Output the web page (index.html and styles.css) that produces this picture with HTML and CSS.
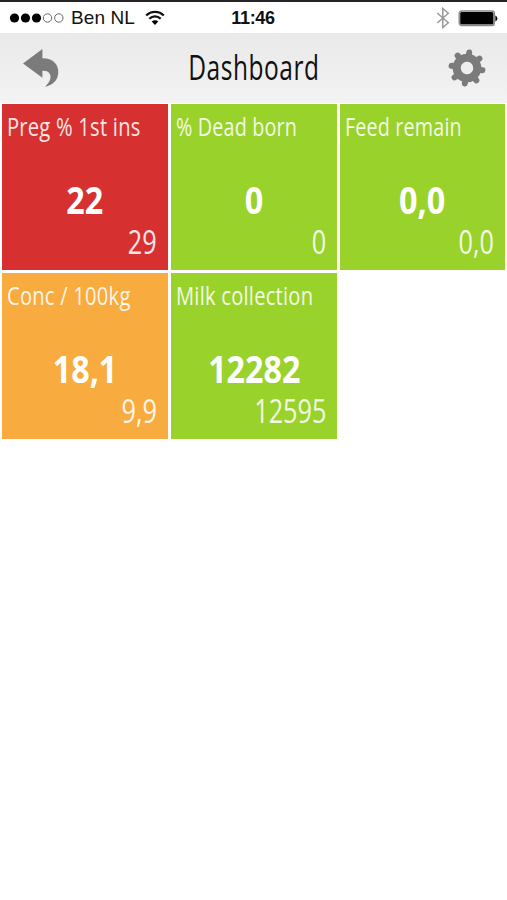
FILE: index.html
```
<!DOCTYPE html>
<html lang="en">
<head>
    <meta charset="UTF-8">
    <meta name="viewport" content="width=device-width, initial-scale=1.0">
    <title>Dashboard</title>
    <link rel="stylesheet" href="styles.css">
</head>
<body>
    <!-- Status bar -->
    <div class="status-bar">
        <div class="carrier">
            <svg class="signal" width="56" height="12" viewBox="0 0 56 12">
                <circle cx="6.500" cy="6" r="4.600"/>
                <circle cx="17.500" cy="6" r="4.600"/>
                <circle cx="28.500" cy="6" r="4.600"/>
                <circle class="empty" cx="39.500" cy="6" r="4.200"/>
                <circle class="empty" cx="50.800" cy="6" r="4.200"/>
            </svg>
            <span class="carrier-name">Ben NL</span>
            <svg class="wifi" width="20" height="16" viewBox="0 0 20 16">
                <path class="arc" d="M1.2 5.6C6 .7 14 .7 18.8 5.6"/>
                <path class="arc" d="M4.3 8.8c3.2-3.2 8.2-3.2 11.4 0"/>
                <path d="M6.7 11.6c1.9-1.8 4.7-1.8 6.6 0L10 15z"/>
            </svg>
        </div>
        <div class="clock">11:46</div>
        <div class="device">
            <svg class="bluetooth" width="14" height="22" viewBox="0 0 14 22">
                <path d="M1.3 6l11 9.8L6.8 20.5V1.5l5.5 4.7L1.3 16"/>
            </svg>
            <svg class="battery" width="40" height="17" viewBox="0 0 40 17">
                <rect class="case" x="1.200" y="1" width="35.200" height="14.600" rx="2.5"/>
                <rect x="2.200" y="2" width="33.200" height="12.600" rx="1.5"/>
                <path d="M37.4 5.4q2 1 2 3t-2 3z"/>
            </svg>
        </div>
    </div>

    <!-- Header -->
    <div class="header">
        <svg class="icon" width="40" height="40" viewBox="0 0 40 40">
            <path d="M2 15.5L21.400 1v9.200C31.500 10 37.500 16 37.300 24.500c-.3 8-5.800 12.800-13.200 14.200C28 35 30.200 31.300 29.300 27.300c-.8-3.500-3.900-4.800-7.900-4.500V29.800z"/>
        </svg>
        <h1><span>Dashboard</span></h1>
        <svg class="icon" width="40" height="40" viewBox="-20 -20 40 40">
            <g transform="rotate(8)">
                <path class="teeth" d="M0-12V-15.600M0 12V15.600M-12 0H-15.600M12 0H15.600M-8.500-8.500L-11-11M8.500 8.500L11 11M8.500-8.500L11-11M-8.500 8.500L-11 11"/>
                <circle class="ring" r="10.300"/>
            </g>
        </svg>
    </div>

    <!-- Tiles -->
    <div class="tiles">
        <div class="tile red">
            <span class="label loose">Preg % 1st ins</span>
            <span class="value">22</span>
            <span class="previous">29</span>
        </div>
        <div class="tile green">
            <span class="label">% Dead born</span>
            <span class="value">0</span>
            <span class="previous">0</span>
        </div>
        <div class="tile green">
            <span class="label">Feed remain</span>
            <span class="value">0,0</span>
            <span class="previous">0,0</span>
        </div>
        <div class="tile orange">
            <span class="label loose">Conc / 100kg</span>
            <span class="value">18,1</span>
            <span class="previous">9,9</span>
        </div>
        <div class="tile green">
            <span class="label loose">Milk collection</span>
            <span class="value">12282</span>
            <span class="previous">12595</span>
        </div>
    </div>
</body>
</html>
```

FILE: styles.css
```
* {
    box-sizing: border-box;
}

body {
    margin: 0;
    background: #fff;
    font-family: "Open Sans", "Noto Sans", sans-serif;
    overflow: hidden;
}

/* Status bar */
.status-bar {
    display: grid;
    grid-template-columns: 1fr auto 1fr;
    align-items: center;
    height: 33px;
    padding: 1px 9px 0 8px;
    border-top: 2px solid #262427;
    font-family: "Liberation Sans", Arial, sans-serif;
    font-size: 19px;
    line-height: 24px;
    color: #111;
}

.carrier,
.device {
    display: flex;
    align-items: center;
}

.carrier-name {
    margin-left: 7px;
    letter-spacing: 0.1px;
}

.signal .empty {
    fill: none;
    stroke: #666;
    stroke-width: 1;
}

.wifi {
    margin-left: 10px;
}

.wifi .arc {
    fill: none;
    stroke: #111;
    stroke-width: 2.2;
}

.clock {
    font-size: 18px;
    font-weight: bold;
    letter-spacing: -0.3px;
}

.device {
    justify-content: flex-end;
    gap: 8px;
}

.bluetooth path {
    fill: none;
    stroke: #999;
    stroke-width: 1.5;
}

.battery .case {
    fill: #fff;
    stroke: #888;
    stroke-width: 1.4;
}

/* Header */
.header {
    display: flex;
    justify-content: space-between;
    align-items: center;
    height: 70px;
    padding: 0 20px 0 21px;
    background: linear-gradient(#e9e9e9, #f3f3f3);
}

.header h1 {
    margin: -3px 0 0 -1px;
    font-size: 35px;
    font-weight: 400;
    line-height: 48px;
    color: #111;
}

.header h1 span {
    display: inline-block;
    letter-spacing: 0.8px;
    transform: scaleX(0.7);
}

.icon {
    fill: #7b7b7b;
}

.icon .teeth {
    fill: none;
    stroke: #7b7b7b;
    stroke-width: 6;
    stroke-linecap: round;
}

.icon .ring {
    fill: none;
    stroke: #7b7b7b;
    stroke-width: 8;
}

/* Tiles */
.tiles {
    display: grid;
    grid-template-columns: 166px 166px 165px;
    grid-auto-rows: 166px;
    gap: 3px;
    padding: 1px 2px;
}

.tile {
    display: flex;
    flex-direction: column;
    padding: 4px 11px 0 5px;
    color: #fff;
    white-space: nowrap;
}

.red {
    background: #d73030;
}

.green {
    background: #99d22b;
}

.orange {
    background: #f8ab3e;
}

.label {
    align-self: flex-start;
    font-size: 26px;
    line-height: 36px;
    letter-spacing: 0.2px;
    opacity: 0.88;
    transform: scaleX(0.76);
    transform-origin: left;
}

.label.loose {
    letter-spacing: 0.3px;
    transform: scaleX(0.775);
}

.value {
    align-self: center;
    margin: 30px 0 0 6px;
    font-size: 38px;
    font-weight: 700;
    line-height: 50px;
    transform: scaleX(0.85);
}

.previous {
    align-self: flex-end;
    margin-top: -3px;
    font-size: 32px;
    line-height: 42px;
    opacity: 0.88;
    transform: scaleX(0.79);
    transform-origin: right;
}
```
